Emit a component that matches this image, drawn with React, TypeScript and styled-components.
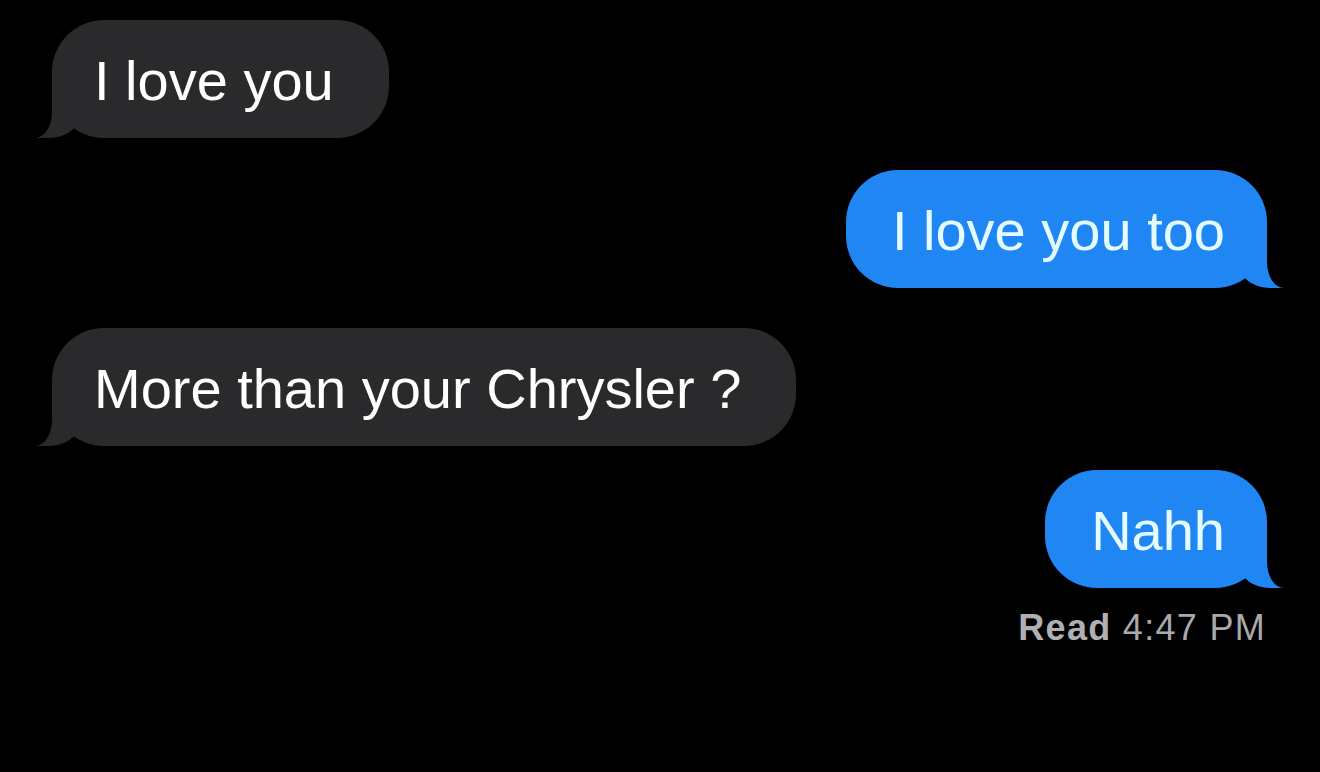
import styled, { createGlobalStyle, css } from 'styled-components'

type Side = 'them' | 'me'

const messages: { id: number; side: Side; text: string; gap: number }[] = [
  { id: 1, side: 'them', text: 'I love you', gap: 0 },
  { id: 2, side: 'me', text: 'I love you too', gap: 32 },
  { id: 3, side: 'them', text: 'More than your Chrysler ?', gap: 40 },
  { id: 4, side: 'me', text: 'Nahh', gap: 24 },
]

export default function App() {
  return (
    <>
      <GlobalStyle />
      <Thread>
        {messages.map((m) => (
          <Bubble key={m.id} $side={m.side} $gap={m.gap}>
            <Text>{m.text}</Text>
          </Bubble>
        ))}
        <Receipt>
          <strong>Read</strong> 4:47 PM
        </Receipt>
      </Thread>
    </>
  )
}

const GlobalStyle = createGlobalStyle`
  html, body {
    margin: 0;
    padding: 0;
    background: #000;
  }
  body {
    font-family: 'Liberation Sans', Arial, sans-serif;
    -webkit-font-smoothing: antialiased;
  }
`

const Thread = styled.div`
  box-sizing: border-box;
  width: 1320px;
  height: 772px;
  overflow: hidden;
  display: flex;
  flex-direction: column;
  padding: 20px 53px 0 52px;
  background: #000;
`

const themTail = css`
  background: #2a2a2c;
  color: #fff;
  padding: 29px 55px 25px 42px;

  &::before {
    left: -17px;
    width: 44px;
    background: #2a2a2c;
    border-bottom-right-radius: 30px 22px;
  }

  &::after {
    left: -60px;
    width: 60px;
    background: #000;
    border-bottom-right-radius: 17px 26px;
  }
`

const meTail = css`
  background: #1f86f4;
  color: #e4fbff;
  padding: 29px 42px 25px 46px;

  &::before {
    right: -17px;
    width: 44px;
    background: #1f86f4;
    border-bottom-left-radius: 30px 22px;
  }

  &::after {
    right: -60px;
    width: 60px;
    background: #000;
    border-bottom-left-radius: 17px 26px;
  }
`

const Bubble = styled.div<{ $side: Side; $gap: number }>`
  position: relative;
  align-self: ${(p) => (p.$side === 'me' ? 'flex-end' : 'flex-start')};
  margin-top: ${(p) => p.$gap}px;
  border-radius: 52px;
  font-size: 56px;
  line-height: 64px;
  white-space: nowrap;

  &::before,
  &::after {
    content: '';
    position: absolute;
    bottom: 0;
    height: 54px;
  }

  ${(p) => (p.$side === 'me' ? meTail : themTail)}
`

const Text = styled.span`
  position: relative;
  z-index: 1;
`

const Receipt = styled.div`
  align-self: flex-end;
  margin-top: 18px;
  margin-right: 1px;
  font-size: 36px;
  line-height: 44px;
  letter-spacing: 1.3px;
  color: #a9a9ab;

  strong {
    font-weight: 700;
    color: #b0b0b2;
  }
`
